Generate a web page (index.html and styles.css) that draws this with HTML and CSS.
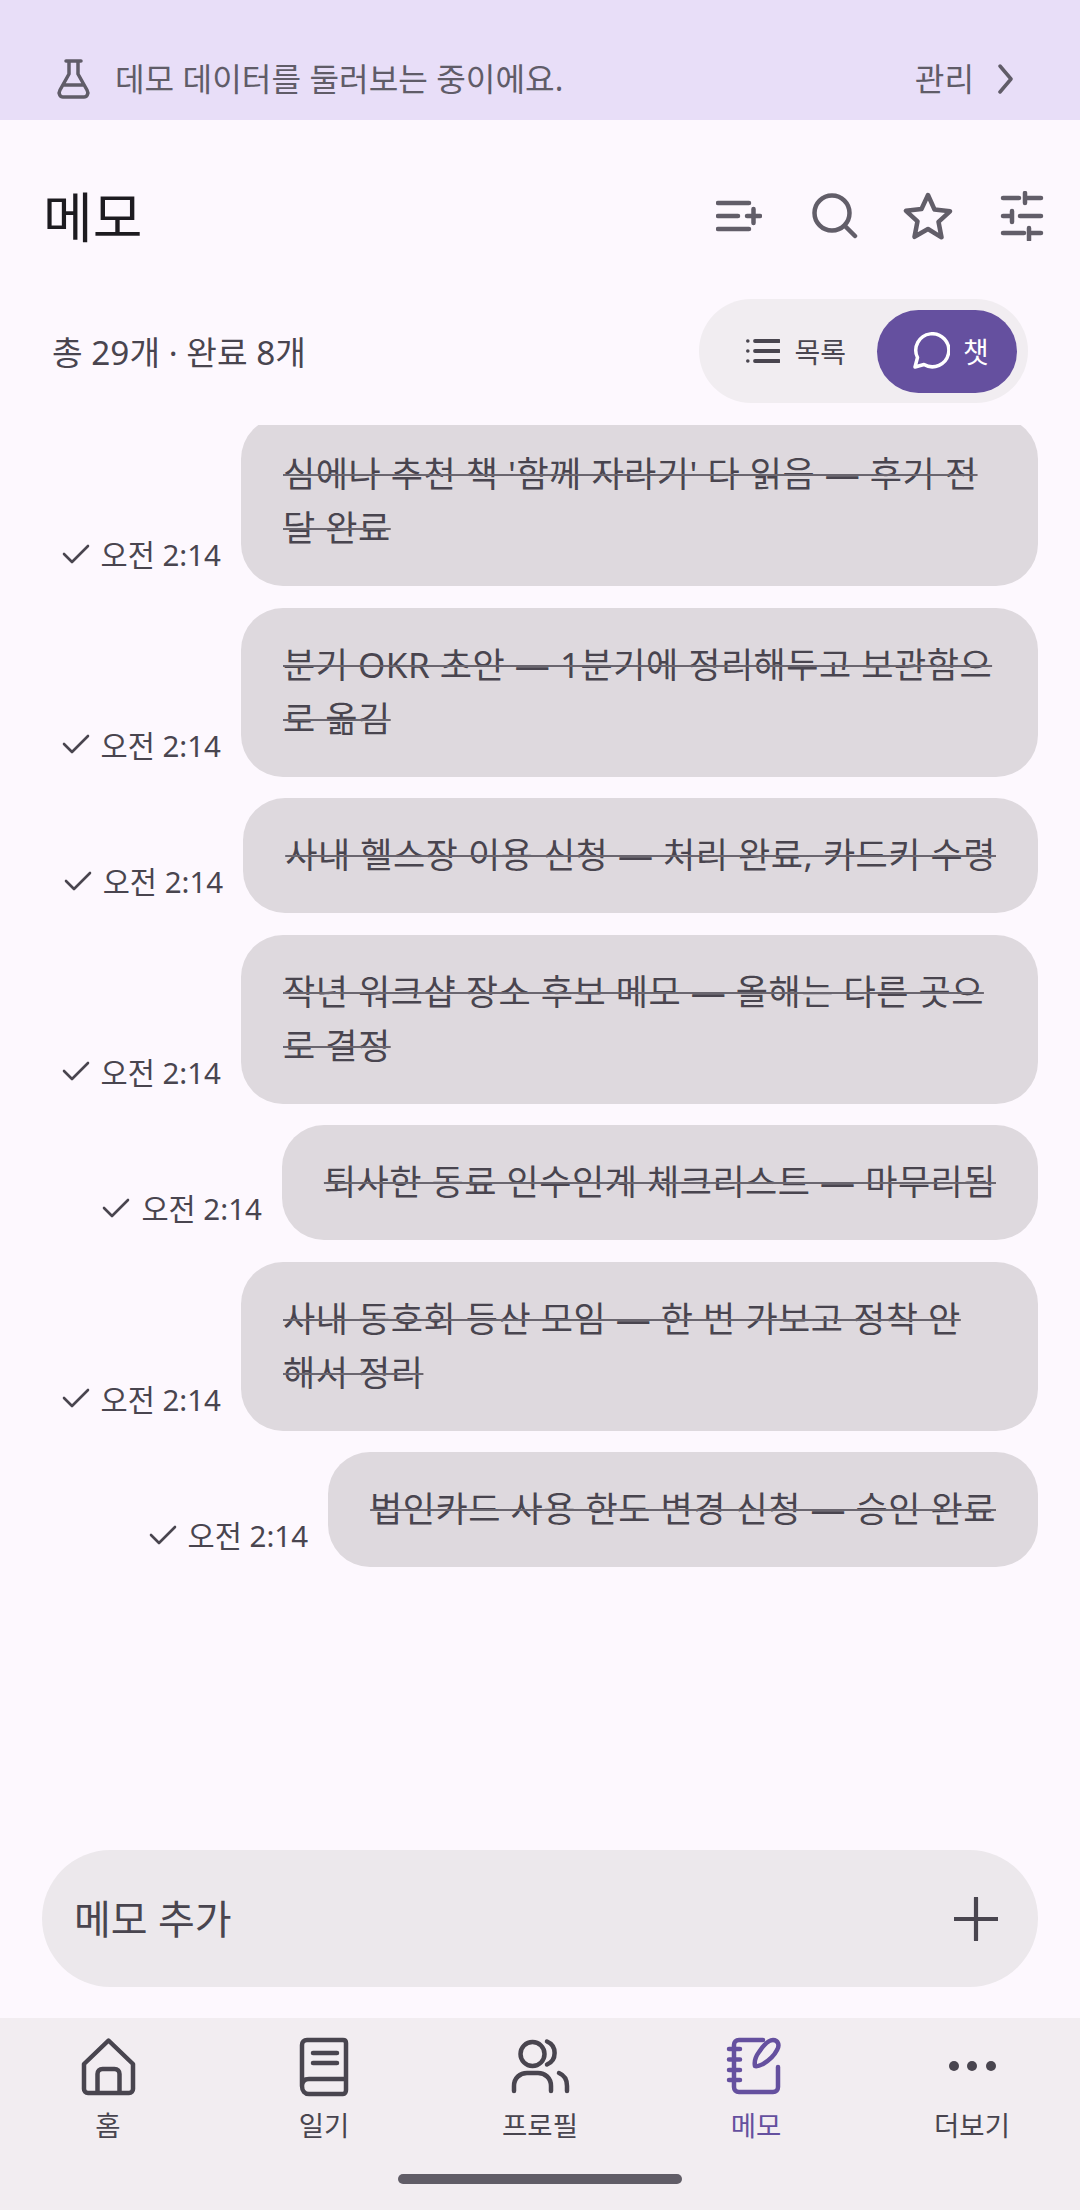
FILE: index.html
```html
<!DOCTYPE html>
<html lang="ko">
<head>
<meta charset="utf-8">
<title>메모</title>
<link rel="stylesheet" href="styles.css">
</head>
<body>
<div class="app">
  <div class="banner">
    <svg class="flask" viewBox="0 0 36 40"><path d="M10 2h15M13 2v13L4 31c-2 3.500 0 7 3 7h21c3 0 5-3.500 3-7l-9-16V2M8 26h20" /></svg>
    <span class="banner-text">데모 데이터를 둘러보는 중이에요.</span>
    <span class="banner-link">관리</span>
    <svg class="chev" viewBox="0 0 16 30"><path d="M2 2l11 13L2 28"/></svg>
  </div>
  <header class="head">
    <h1 class="title">메모</h1>
    <div class="actions">
      <svg class="act act-add" viewBox="0 0 46 34"><path d="M2 4h31M2 17h20M2 30h31M31 17h13M37.500 10v14"/></svg>
      <svg class="act act-search" viewBox="0 0 46 48"><circle cx="20" cy="21" r="17.500"/><path d="M33 34l10 10"/></svg>
      <svg class="act act-star" viewBox="0 0 50 48"><path d="M25 3l6.500 14.500 15.500 1.800-11.500 10.500 3 15.500L25 37l-13.500 7.800 3-15.500L3 18.800l15.500-1.800z"/></svg>
      <svg class="act act-tune" viewBox="0 0 45 50"><path d="M4 7h16M26 2v10M26 7h16M4 25h8M13 20v11M21 25h21M4 42h21M30 37v12M30 42h12"/></svg>
    </div>
  </header>
  <div class="meta">
    <span class="count">총 29개 · 완료 8개</span>
    <div class="seg">
      <div class="seg-item">
        <svg class="seg-list" viewBox="0 0 34 26"><path d="M9 3h24M9 13h24M9 23h24"/><circle cx="1.800" cy="3" r="1.800"/><circle cx="1.800" cy="13" r="1.800"/><circle cx="1.800" cy="23" r="1.800"/></svg>
        <span>목록</span>
      </div>
      <div class="seg-item seg-on">
        <svg class="seg-chat" viewBox="0 0 38 38"><path d="M3 35l2.500-9.500A16.500 16.500 0 1 1 12 32.500z"/></svg>
        <span>챗</span>
      </div>
    </div>
  </div>
  <main class="list">
    <div class="list-inner">
      <div class="row"><div class="time"><svg class="check" viewBox="0 0 28 22"><path d="M2 11l8 8L26 3"/></svg>오전 2:14</div><div class="bubble">심에나 추천 책 '함께 자라기' 다 읽음 — 후기 전달 완료</div></div>
      <div class="row"><div class="time"><svg class="check" viewBox="0 0 28 22"><path d="M2 11l8 8L26 3"/></svg>오전 2:14</div><div class="bubble">분기 OKR 초안 — 1분기에 정리해두고 보관함으로 옮김</div></div>
      <div class="row"><div class="time"><svg class="check" viewBox="0 0 28 22"><path d="M2 11l8 8L26 3"/></svg>오전 2:14</div><div class="bubble">사내 헬스장 이용 신청 — 처리 완료, 카드키 수령</div></div>
      <div class="row"><div class="time"><svg class="check" viewBox="0 0 28 22"><path d="M2 11l8 8L26 3"/></svg>오전 2:14</div><div class="bubble">작년 워크샵 장소 후보 메모 — 올해는 다른 곳으로 결정</div></div>
      <div class="row"><div class="time"><svg class="check" viewBox="0 0 28 22"><path d="M2 11l8 8L26 3"/></svg>오전 2:14</div><div class="bubble">퇴사한 동료 인수인계 체크리스트 — 마무리됨</div></div>
      <div class="row"><div class="time"><svg class="check" viewBox="0 0 28 22"><path d="M2 11l8 8L26 3"/></svg>오전 2:14</div><div class="bubble">사내 동호회 등산 모임 — 한 번 가보고 정착 안 해서 정리</div></div>
      <div class="row"><div class="time"><svg class="check" viewBox="0 0 28 22"><path d="M2 11l8 8L26 3"/></svg>오전 2:14</div><div class="bubble">법인카드 사용 한도 변경 신청 — 승인 완료</div></div>
    </div>
  </main>
  <div class="composer">
    <span class="composer-text">메모 추가</span>
    <svg class="plus" viewBox="0 0 44 44"><path d="M22 1v42M1 22h42"/></svg>
  </div>
  <nav class="nav">
    <div class="nav-item">
      <svg class="nav-icon" viewBox="0 0 63 63"><path d="M31.500 5.500L7 29v25c0 2 1.500 4 4 4h41c2.500 0 4-2 4-4V29zM20.500 58V39c0-3 2-5 5-5h12c3 0 5 2 5 5v19"/></svg>
      <span>홈</span>
    </div>
    <div class="nav-item">
      <svg class="nav-icon" viewBox="0 0 63 63"><path d="M9 51V10c0-3 2-5 5-5h36c2 0 3 1 3 3v47c0 2-1 4-3 4H16c-4 0-7-3-7-8s3-7 7-7h37M20 18h24M20 28h24"/></svg>
      <span>일기</span>
    </div>
    <div class="nav-item">
      <svg class="nav-icon" viewBox="0 0 63 63"><circle cx="23.500" cy="19" r="12"/><path d="M38 6.500a12.500 12.500 0 0 1 0 23M5 56v-5c0-8 6-13 13-13h11c7 0 13 5 13 13v5M50 38c5 2 8 6 8 13v5"/></svg>
      <span>프로필</span>
    </div>
    <div class="nav-item nav-on">
      <svg class="nav-icon" viewBox="0 0 63 63"><path d="M38 5H14c-3 0-5 2-5 5v42c0 3 2 5 5 5h34c3 0 5-2 5-5V32M4 14h11M4 24.500h11M4 35h11M4 45h11M30 31c-1-5 1-10 4-14 4-6 9-12 14-12s7 5 4 10c-3 6-9 11-14 14-3 1.500-6 3-8 2z"/></svg>
      <span>메모</span>
    </div>
    <div class="nav-item">
      <svg class="nav-icon nav-dots" viewBox="0 0 63 63"><circle cx="13" cy="31" r="5"/><circle cx="31" cy="31" r="5"/><circle cx="50" cy="31" r="5"/></svg>
      <span>더보기</span>
    </div>
    <div class="home-bar"></div>
  </nav>
</div>
</body>
</html>
```
FILE: styles.css
```css
* { box-sizing: border-box; }
html, body { margin: 0; padding: 0; }
body {
  width: 1080px;
  height: 2210px;
  overflow: hidden;
  background: #fdf8fe;
  color: #49454f;
  font-family: "Noto Sans", "Noto Sans CJK KR", sans-serif;
}
svg { display: block; fill: none; stroke-linecap: round; stroke-linejoin: round; }
.app { display: flex; flex-direction: column; height: 2210px; }

.banner {
  height: 120px;
  flex: none;
  background: #e8def8;
  display: flex;
  align-items: center;
  padding: 38px 0 0 56px;
  color: #605c68;
  font-size: 32.200px;
}
.flask { width: 36px; height: 40px; stroke: #605c68; stroke-width: 3.500; margin-right: 23px; }
.banner-text { flex: 1; margin-bottom: 4px; }
.banner-link { margin: 0 24px 4px 0; }
.chev { width: 16px; height: 30px; stroke: #605c68; stroke-width: 3.500; margin-right: 66px; }

.head { height: 130px; margin-top: 32px; flex: none; display: flex; align-items: center; padding: 0 36px 0 43px; justify-content: space-between; }
.title { margin: 0; font-size: 54px; font-weight: 400; color: #1d1b20; line-height: 1; }
.actions { display: flex; align-items: center; margin-top: -3px; }
.act { stroke: #625e69; stroke-width: 4.500; }
.act-add { width: 46px; height: 34px; margin-right: 50px; }
.act-search { width: 46px; height: 48px; margin-right: 45px; }
.act-star { width: 50px; height: 48px; margin-right: 46px; }
.act-tune { width: 45px; height: 50px; }

.meta { height: 104px; margin-top: 17px; flex: none; display: flex; align-items: center; justify-content: space-between; padding: 0 52px 0 52px; }
.count { font-size: 33.300px; color: #49454f; margin-bottom: 2px; }
.seg { width: 329px; height: 104px; border-radius: 52px; background: #f1edf1; display: flex; align-items: center; justify-content: flex-end; padding-right: 11px; }
.seg-item { display: flex; align-items: center; font-size: 28px; height: 83px; }
.seg-item:first-child { margin-right: 31px; }
.seg-on { width: 140px; border-radius: 42px; background: #65509f; color: #fff; padding-left: 35px; }
.seg-list { width: 34px; height: 26px; stroke: #49454f; stroke-width: 3.800; margin-right: 14px; }
.seg-list circle { fill: #49454f; stroke: none; }
.seg-chat { width: 38px; height: 38px; stroke: #fff; stroke-width: 3.500; margin-right: 13px; }

.list { flex: 1; min-height: 0; overflow: hidden; margin-top: 22px; }
.list-inner { margin-top: -8px; display: flex; flex-direction: column; gap: 21.500px; padding-right: 42px; }
.row { display: flex; justify-content: flex-end; align-items: flex-end; }
.time { display: flex; align-items: center; font-size: 29.500px; margin: 0 20px 11px 0; white-space: nowrap; flex: none; }
.check { width: 28px; height: 22px; stroke: #49454f; stroke-width: 2.600; margin-right: 11px; }
.bubble {
  max-width: 797px;
  padding: 30px 42px 31px;
  background: #ded9de;
  border-radius: 42px;
  font-size: 35px;
  letter-spacing: .5px;
  line-height: 54px;
  color: #49454f;
  text-decoration: line-through;
  text-decoration-color: #6a666f;
  text-decoration-thickness: 2px;
}

.composer { height: 137px; flex: none; margin: 0 42px 31px; padding: 0 40px 0 32px; border-radius: 69px; background: #ece8ec; display: flex; align-items: center; justify-content: space-between; }
.composer-text { font-size: 40px; color: #49454f; margin-bottom: 3px; }
.plus { width: 44px; height: 44px; stroke: #49454f; stroke-width: 4.200; }

.nav { position: relative; height: 192px; flex: none; background: #f2edf1; display: grid; grid-template-columns: repeat(5, 216px); padding-top: 17px; }
.nav-item { display: flex; flex-direction: column; align-items: center; font-size: 27.500px; color: #49454f; line-height: 36px; }
.nav-icon { width: 63px; height: 63px; stroke: #49454f; stroke-width: 4.500; margin-bottom: 10px; }
.nav-dots circle { fill: #49454f; stroke: none; }
.nav-on { color: #65509f; }
.nav-on .nav-icon { stroke: #65509f; }
.home-bar { position: absolute; left: 398px; top: 156px; width: 284px; height: 10px; border-radius: 5px; background: #615d67; }
```
